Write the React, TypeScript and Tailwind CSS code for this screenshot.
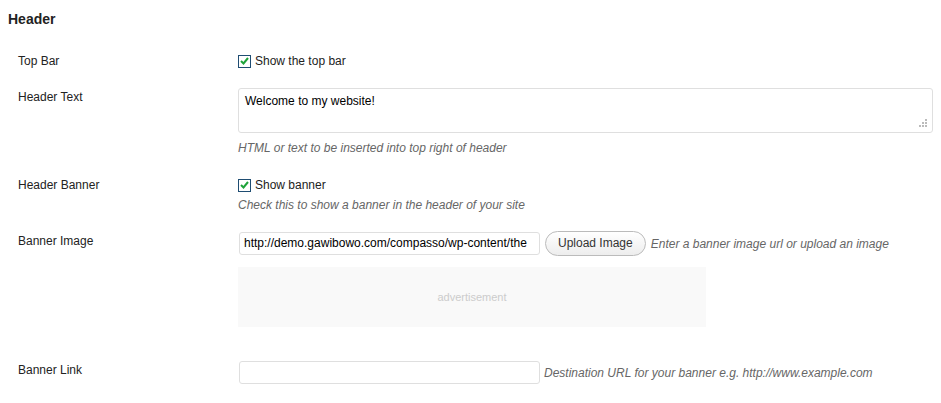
import React from "react";

function Check({ label }: { label: string }) {
  return (
    <label className="flex items-center gap-[4px] h-4 leading-4">
      <span className="w-[13px] h-[13px] border border-[#1f4d72] bg-white flex items-center justify-center">
        <svg width="9" height="8" viewBox="0 0 9 8">
          <path d="M1 4 L3.5 6.5 L8 1" fill="none" stroke="#1fa33a" strokeWidth="2" />
        </svg>
      </span>
      <span>{label}</span>
    </label>
  );
}

function Row({ label, children, className = "" }: { label: string; children: React.ReactNode; className?: string }) {
  return (
    <div className={"flex " + className}>
      <div className="w-[230px] shrink-0 pl-[10px] leading-4">{label}</div>
      <div className="flex-1">{children}</div>
    </div>
  );
}

function Help({ children, className = "" }: { children: React.ReactNode; className?: string }) {
  return <p className={"italic text-[#666] leading-4 " + className}>{children}</p>;
}

export default function App() {
  return (
    <div
      className="w-[941px] h-[403px] bg-white text-[12px] text-[#222] px-2 overflow-hidden"
      style={{ fontFamily: '"Liberation Sans", Arial, sans-serif' }}
    >
      <h2 className="pt-[11px] text-[14px] font-bold leading-4 text-[#222]">Header</h2>

      <Row label="Top Bar" className="mt-[26px]">
        <Check label="Show the top bar" />
      </Row>

      <Row label="Header Text" className="mt-[20px]">
        <div className="-mt-[1px]">
          <div className="relative w-[695px] h-[45px] border border-[#dfdfdf] rounded-[3px] bg-white px-[6px] pt-[4px] leading-4 text-black">
            Welcome to my website!
            <svg className="absolute right-[4px] bottom-[4px]" width="9" height="9" viewBox="0 0 9 9">
              <rect x="6" y="0" width="2" height="2" fill="#bbb" />
              <rect x="3" y="3" width="2" height="2" fill="#bbb" />
              <rect x="6" y="3" width="2" height="2" fill="#bbb" />
              <rect x="0" y="6" width="2" height="2" fill="#bbb" />
              <rect x="3" y="6" width="2" height="2" fill="#bbb" />
              <rect x="6" y="6" width="2" height="2" fill="#bbb" />
            </svg>
          </div>
          <Help className="mt-[7px]">HTML or text to be inserted into top right of header</Help>
        </div>
      </Row>

      <Row label="Header Banner" className="mt-[21px]">
        <Check label="Show banner" />
        <Help className="mt-[4px]">Check this to show a banner in the header of your site</Help>
      </Row>

      <Row label="Banner Image" className="mt-[20px]">
        <div className="flex items-center -mt-[2px]">
          <div className="w-[301px] h-[23px] border border-[#dfdfdf] rounded-[3px] bg-white px-[4px] leading-[21px] text-black overflow-hidden whitespace-nowrap ml-px">
            http://demo.gawibowo.com/compasso/wp-content/the
          </div>
          <button className="ml-[5px] h-[25px] px-[12px] rounded-full border border-[#bbb] bg-gradient-to-b from-white to-[#ededed] text-[#333] text-[12px] leading-[23px]">
            Upload Image
          </button>
          <span className="ml-[5px] italic text-[#666]">Enter a banner image url or upload an image</span>
        </div>
        <div className="mt-[11px] w-[468px] h-[60px] bg-[#f9f9f9] flex items-center justify-center text-[11px] text-[#ccc]">
          advertisement
        </div>
      </Row>

      <Row label="Banner Link" className="mt-[35px]">
        <div className="flex items-center -mt-[1px]">
          <div className="w-[301px] h-[23px] border border-[#dfdfdf] rounded-[3px] bg-white ml-px" />
          <span className="ml-[4px] italic text-[#666]">Destination URL for your banner e.g. http://www.example.com</span>
        </div>
      </Row>
    </div>
  );
}
